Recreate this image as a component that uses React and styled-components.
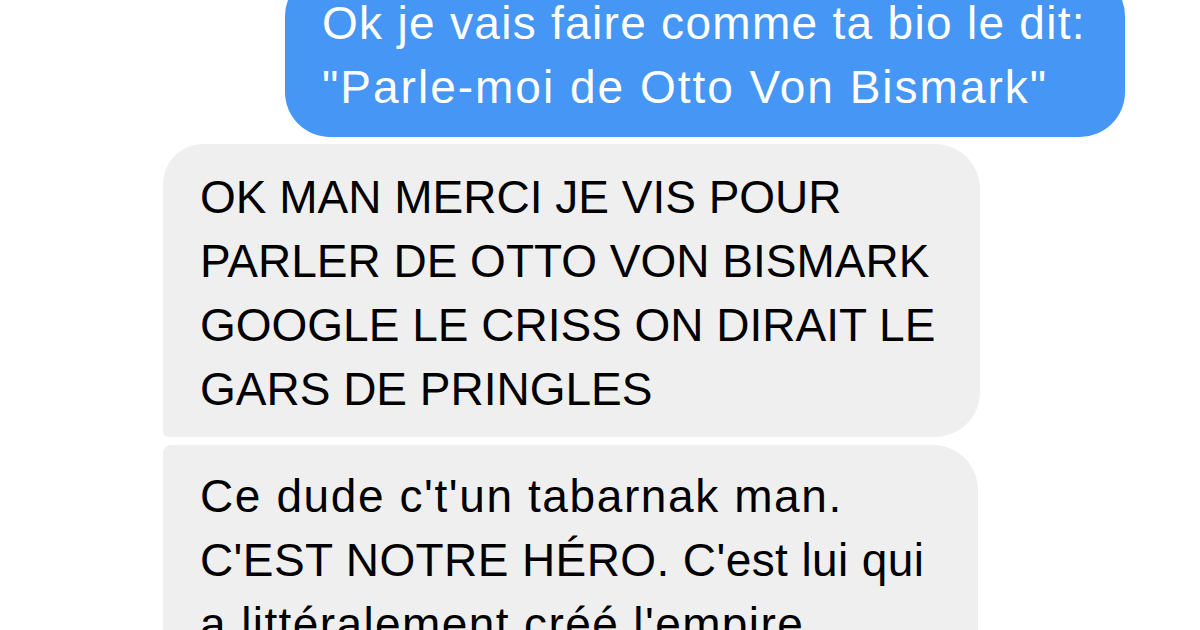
import React from "react";
import styled, { createGlobalStyle } from "styled-components";

const Global = createGlobalStyle`
  html, body {
    margin: 0;
    padding: 0;
    background: #ffffff;
  }
  body {
    width: 1200px;
    height: 630px;
    overflow: hidden;
    font-family: "Liberation Sans", Arial, sans-serif;
    -webkit-font-smoothing: antialiased;
  }
`;

const Thread = styled.main`
  display: flex;
  flex-direction: column;
  align-items: flex-start;
  gap: 7px;
  padding: 0 75px 0 163px;
  width: 1200px;
  height: 630px;
  box-sizing: border-box;
  overflow: hidden;
`;

const Bubble = styled.div`
  box-sizing: border-box;
  width: ${(p) => p.$width}px;
  padding: ${(p) => p.$pad};
  font-size: 46px;
  line-height: 64px;
  white-space: nowrap;
  border-radius: ${(p) => p.$radius};
  background: ${(p) => (p.$sent ? "#4696f5" : "#efefef")};
  color: ${(p) => (p.$sent ? "#ffffff" : "#000000")};
  align-self: ${(p) => (p.$sent ? "flex-end" : "flex-start")};
  margin-top: ${(p) => p.$offset || 0}px;
  flex-shrink: 0;
`;

const Line = styled.span`
  display: block;
  letter-spacing: ${(p) => p.$track || 0}px;
`;

const Group = styled.div`
  display: flex;
  flex-direction: column;
  gap: 8px;
`;

export default function App() {
  return (
    <>
      <Global />
      <Thread>
        <Bubble $sent $width={840} $offset={-29} $pad="20px 30px 18px 37px" $radius="45px">
          <Line $track={1.3}>Ok je vais faire comme ta bio le dit:</Line>
          <Line $track={2}>"Parle-moi de Otto Von Bismark"</Line>
        </Bubble>
        <Group>
          <Bubble $width={817} $pad="21px 30px 16px 37px" $radius="40px 45px 45px 6px">
            <Line>OK MAN MERCI JE VIS POUR</Line>
            <Line>PARLER DE OTTO VON BISMARK</Line>
            <Line>GOOGLE LE CRISS ON DIRAIT LE</Line>
            <Line>GARS DE PRINGLES</Line>
          </Bubble>
          <Bubble $width={815} $pad="19px 30px 20px 37px" $radius="8px 45px 45px 45px">
            <Line $track={1.6}>Ce dude c't'un tabarnak man.</Line>
            <Line $track={0.4}>C'EST NOTRE HÉRO. C'est lui qui</Line>
            <Line $track={1.4}>a littéralement créé l'empire</Line>
          </Bubble>
        </Group>
      </Thread>
    </>
  );
}
